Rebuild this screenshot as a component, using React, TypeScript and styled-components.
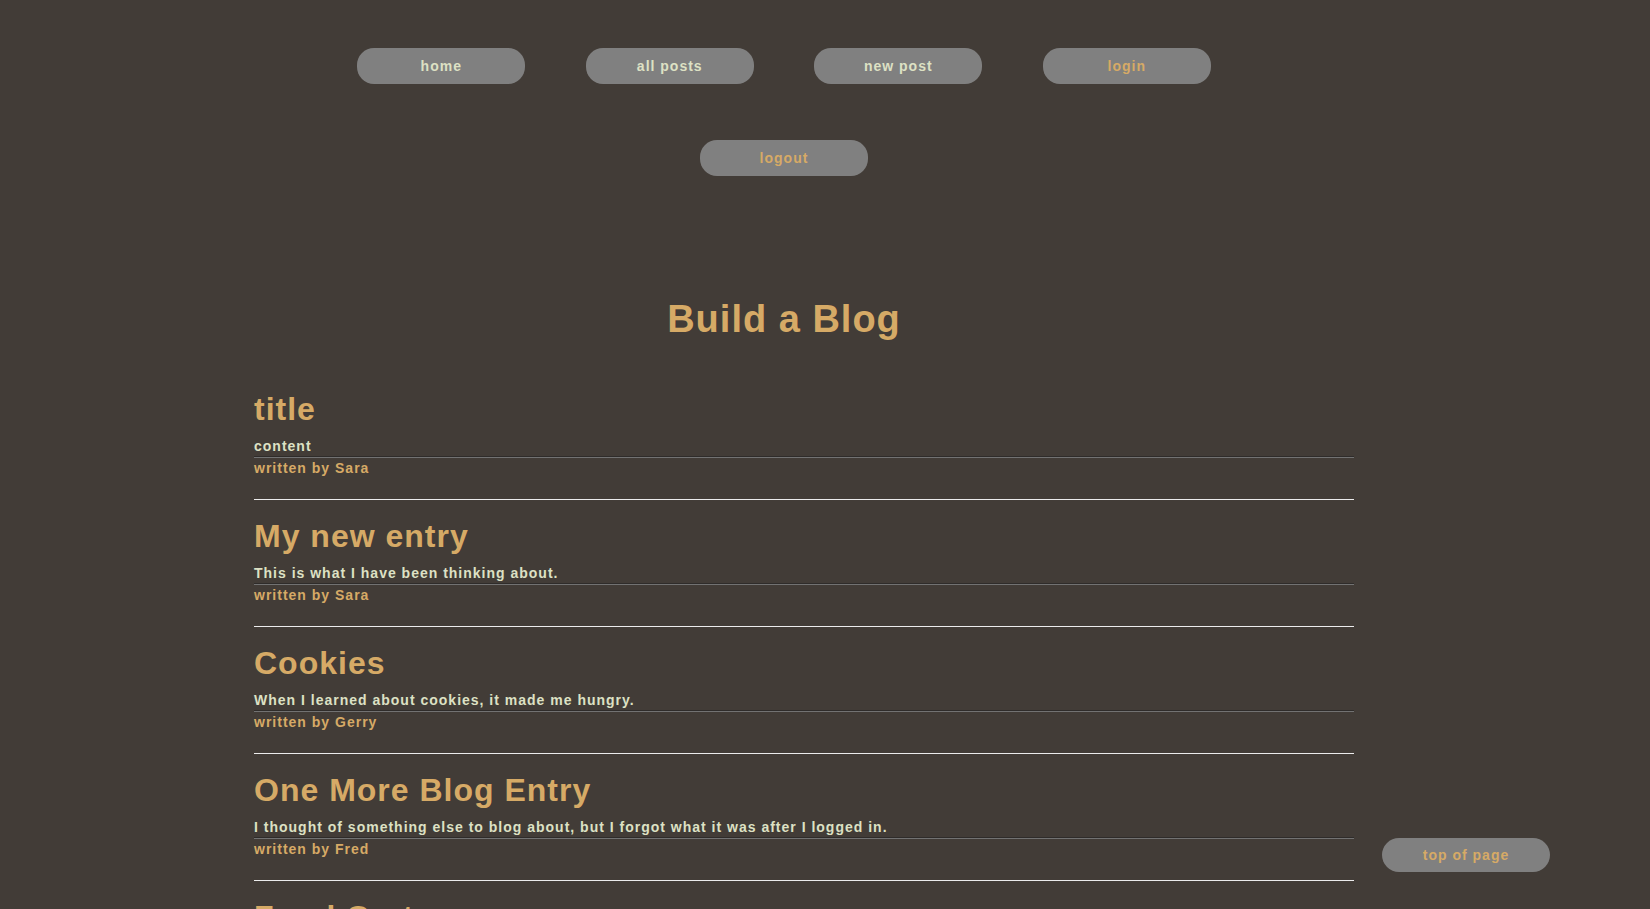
import React from "react";
import styled, { createGlobalStyle } from "styled-components";

const GlobalStyle = createGlobalStyle`
  html, body {
    margin: 0;
    padding: 0;
    background: #423c37;
  }
  body {
    font-family: "Liberation Sans", Arial, Helvetica, sans-serif;
    font-weight: bold;
    letter-spacing: 1px;
  }
`;

const Page = styled.div`
  width: 1552px;
  padding-left: 8px;
  padding-top: 48px;
`;

const Nav = styled.nav`
  width: 900px;
  margin: 0 auto;
  display: flex;
  flex-wrap: wrap;
  justify-content: center;
  column-gap: 60.5px;
  row-gap: 56px;
`;

const NavButton = styled.a<{ $gold?: boolean }>`
  display: block;
  width: 168px;
  height: 36px;
  line-height: 36px;
  border-radius: 17px;
  background: #808080;
  color: ${(p) => (p.$gold ? "#d6aa66" : "#dde1c4")};
  font-size: 14px;
  text-align: center;
  text-decoration: none;
  cursor: pointer;
`;

const Heading = styled.h1`
  margin: 121px 0 0;
  font-size: 38px;
  line-height: 44px;
  color: #d6aa66;
  text-align: center;
`;

const PostList = styled.main`
  margin-top: 32px;
  margin-left: 246px;
  width: 1100px;
`;

const Post = styled.article`
  padding-top: 18px;
  padding-bottom: 23px;
  border-bottom: 1px solid #ececec;
`;

const PostTitle = styled.h2`
  margin: 0;
  font-size: 32px;
  line-height: 37px;
  color: #d6aa66;
`;

const PostBody = styled.p`
  margin: 10px 0 0;
  font-size: 14px;
  line-height: 16px;
  color: #dde1c4;
`;

const Rule = styled.hr`
  margin: 2px 0;
  height: 0;
  border: none;
  border-top: 1px solid #2f2c2a;
  border-bottom: 1px solid #727272;
`;

const Author = styled.p`
  margin: 0;
  font-size: 14px;
  line-height: 16px;
  color: #d6aa66;
`;

const TopButton = styled.a`
  position: fixed;
  right: 100px;
  bottom: 37px;
  width: 168px;
  height: 34px;
  line-height: 34px;
  border-radius: 17px;
  background: #808080;
  color: #d6aa66;
  font-size: 14px;
  text-align: center;
  text-decoration: none;
  cursor: pointer;
`;

const posts = [
  { title: "title", body: "content", author: "Sara" },
  { title: "My new entry", body: "This is what I have been thinking about.", author: "Sara" },
  { title: "Cookies", body: "When I learned about cookies, it made me hungry.", author: "Gerry" },
  {
    title: "One More Blog Entry",
    body: "I thought of something else to blog about, but I forgot what it was after I logged in.",
    author: "Fred",
  },
  { title: "Food Cart", body: "The food cart on the corner has the best tacos.", author: "Gerry" },
];

const navItems = [
  { label: "home" },
  { label: "all posts" },
  { label: "new post" },
  { label: "login", gold: true },
  { label: "logout", gold: true },
];

export default function App() {
  return (
    <>
      <GlobalStyle />
      <Page>
        <Nav>
          {navItems.map((n) => (
            <NavButton key={n.label} $gold={n.gold}>
              {n.label}
            </NavButton>
          ))}
        </Nav>
        <Heading>Build a Blog</Heading>
        <PostList>
          {posts.map((p, i) => (
            <Post key={i}>
              <PostTitle>{p.title}</PostTitle>
              <PostBody>{p.body}</PostBody>
              <Rule />
              <Author>written by {p.author}</Author>
            </Post>
          ))}
        </PostList>
      </Page>
      <TopButton>top of page</TopButton>
    </>
  );
}
